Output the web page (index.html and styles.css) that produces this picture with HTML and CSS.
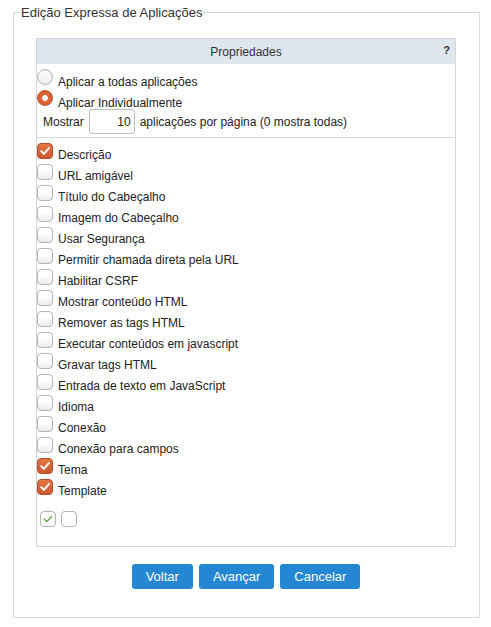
FILE: index.html
```html
<!DOCTYPE html>
<html lang="pt">
<head>
<meta charset="utf-8">
<title>Edição Expressa de Aplicações</title>
<link rel="stylesheet" href="styles.css">
</head>
<body>
<fieldset class="frame">
  <legend class="frame-title">Edição Expressa de Aplicações</legend>
  <div class="panel">
    <div class="panel-head">
      <span class="panel-title">Propriedades</span>
      <span class="help">?</span>
    </div>
    <div class="mode">
      <label class="opt"><span class="radio"></span><span class="txt">Aplicar a todas aplicações</span></label>
      <label class="opt"><span class="radio on"></span><span class="txt">Aplicar Individualmente</span></label>
      <div class="perpage"><span>Mostrar</span><input class="num" type="text" value="10"><span>aplicações por página (0 mostra todas)</span></div>
    </div>
    <div class="fields">
      <label class="opt"><span class="cb on"><svg viewBox="0 0 16 16"><path d="M3.6 8.2 L6.6 11.2 L12.4 4.6"/></svg></span><span class="txt">Descrição</span></label>
      <label class="opt"><span class="cb"></span><span class="txt">URL amigável</span></label>
      <label class="opt"><span class="cb"></span><span class="txt">Título do Cabeçalho</span></label>
      <label class="opt"><span class="cb"></span><span class="txt">Imagem do Cabeçalho</span></label>
      <label class="opt"><span class="cb"></span><span class="txt">Usar Segurança</span></label>
      <label class="opt"><span class="cb"></span><span class="txt">Permitir chamada direta pela URL</span></label>
      <label class="opt"><span class="cb"></span><span class="txt">Habilitar CSRF</span></label>
      <label class="opt"><span class="cb"></span><span class="txt">Mostrar conteúdo HTML</span></label>
      <label class="opt"><span class="cb"></span><span class="txt">Remover as tags HTML</span></label>
      <label class="opt"><span class="cb"></span><span class="txt">Executar conteúdos em javascript</span></label>
      <label class="opt"><span class="cb"></span><span class="txt">Gravar tags HTML</span></label>
      <label class="opt"><span class="cb"></span><span class="txt">Entrada de texto em JavaScript</span></label>
      <label class="opt"><span class="cb"></span><span class="txt">Idioma</span></label>
      <label class="opt"><span class="cb"></span><span class="txt">Conexão</span></label>
      <label class="opt"><span class="cb"></span><span class="txt">Conexão para campos</span></label>
      <label class="opt"><span class="cb on"><svg viewBox="0 0 16 16"><path d="M3.6 8.2 L6.6 11.2 L12.4 4.6"/></svg></span><span class="txt">Tema</span></label>
      <label class="opt"><span class="cb on"><svg viewBox="0 0 16 16"><path d="M3.6 8.2 L6.6 11.2 L12.4 4.6"/></svg></span><span class="txt">Template</span></label>
      <div class="toggles">
        <span class="tg"><svg viewBox="0 0 16 16"><path d="M4 8.4 L6.8 11 L12 5.2"/></svg></span>
        <span class="tg"></span>
      </div>
    </div>
  </div>
  <div class="actions">
    <button class="btn" type="button">Voltar</button>
    <button class="btn" type="button">Avançar</button>
    <button class="btn" type="button">Cancelar</button>
  </div>
</fieldset>
</body>
</html>
```
FILE: styles.css
```css
html, body {
  margin: 0;
  padding: 0;
  background: #ffffff;
}
body {
  font-family: "Liberation Sans", Arial, sans-serif;
  font-size: 12px;
  color: #222222;
}
.frame {
  margin: 5px 11px 0 13px;
  padding: 18px 23px 28px 22px;
  border: 1px solid #d3dae1;
  min-width: 0;
}
.frame-title {
  font-size: 13px;
  line-height: 15px;
  color: #333333;
  padding: 0 1px;
  margin-left: -16px;
}
.panel {
  border: 1px solid #cfd6dd;
}
.panel-head {
  position: relative;
  height: 25px;
  background: #dfe6ee;
  display: flex;
  align-items: center;
  justify-content: center;
  color: #333333;
  font-size: 12px;
}
.help {
  position: absolute;
  right: 5px;
  top: 5px;
  font-weight: bold;
  font-size: 11px;
  color: #333333;
}
.mode {
  padding: 3px 0 3px 0;
  border-bottom: 1px solid #d3dae1;
}
.opt {
  display: flex;
  align-items: flex-start;
  height: 21px;
}
.txt {
  line-height: 13px;
  margin-top: 8px;
  white-space: nowrap;
}
.mode .txt {
  margin-top: 9px;
}
.radio, .cb {
  flex: none;
  width: 16px;
  height: 16px;
  margin-top: 2px;
  margin-right: 5px;
  box-sizing: border-box;
}
.radio {
  border-radius: 50%;
  border: 1px solid #b3b3b3;
  background: linear-gradient(#ffffff, #ececec);
  box-shadow: inset 0 1px 1px rgba(0,0,0,0.08);
}
.radio.on {
  border: 1px solid #b8532c;
  background: radial-gradient(circle, #ffffff 0 2.6px, #e0673a 3.2px, #cf5a2e 100%);
  box-shadow: none;
}
.perpage {
  display: flex;
  align-items: center;
  height: 25px;
  padding-left: 6px;
  margin-top: 0;
}
.num {
  width: 46px;
  height: 25px;
  box-sizing: border-box;
  margin: 0 5px;
  padding: 0 3px 0 0;
  border: 1px solid #b9bec3;
  border-radius: 3px;
  font-family: "Liberation Sans", Arial, sans-serif;
  font-size: 12px;
  color: #222222;
  text-align: right;
}
.fields {
  padding: 3px 0 19px 0;
}
.cb {
  border-radius: 4px;
  border: 1px solid #b5b5b5;
  background: linear-gradient(#ffffff 40%, #ebebeb);
}
.cb.on {
  border: 1px solid #b14f2a;
  background: linear-gradient(#e57443, #cc5a2d);
}
.cb svg {
  display: block;
  width: 14px;
  height: 14px;
}
.cb svg path {
  fill: none;
  stroke: #ffffff;
  stroke-width: 2.2;
  stroke-linecap: round;
  stroke-linejoin: round;
}
.toggles {
  display: flex;
  gap: 5px;
  margin-top: 13px;
  padding-left: 3px;
}
.tg {
  width: 16px;
  height: 16px;
  box-sizing: border-box;
  border: 1px solid #b2b2b2;
  border-radius: 4px;
  background: #ffffff;
}
.tg svg {
  display: block;
  width: 14px;
  height: 14px;
}
.tg svg path {
  fill: none;
  stroke: #5aa83a;
  stroke-width: 1.6;
  stroke-linecap: round;
  stroke-linejoin: round;
}
.actions {
  display: flex;
  justify-content: center;
  gap: 6px;
  margin-top: 17px;
}
.btn {
  height: 25px;
  padding: 0 14px;
  border: none;
  border-radius: 3px;
  background: #2387d3;
  color: #ffffff;
  font-family: "Liberation Sans", Arial, sans-serif;
  font-size: 13px;
  cursor: pointer;
}
```
